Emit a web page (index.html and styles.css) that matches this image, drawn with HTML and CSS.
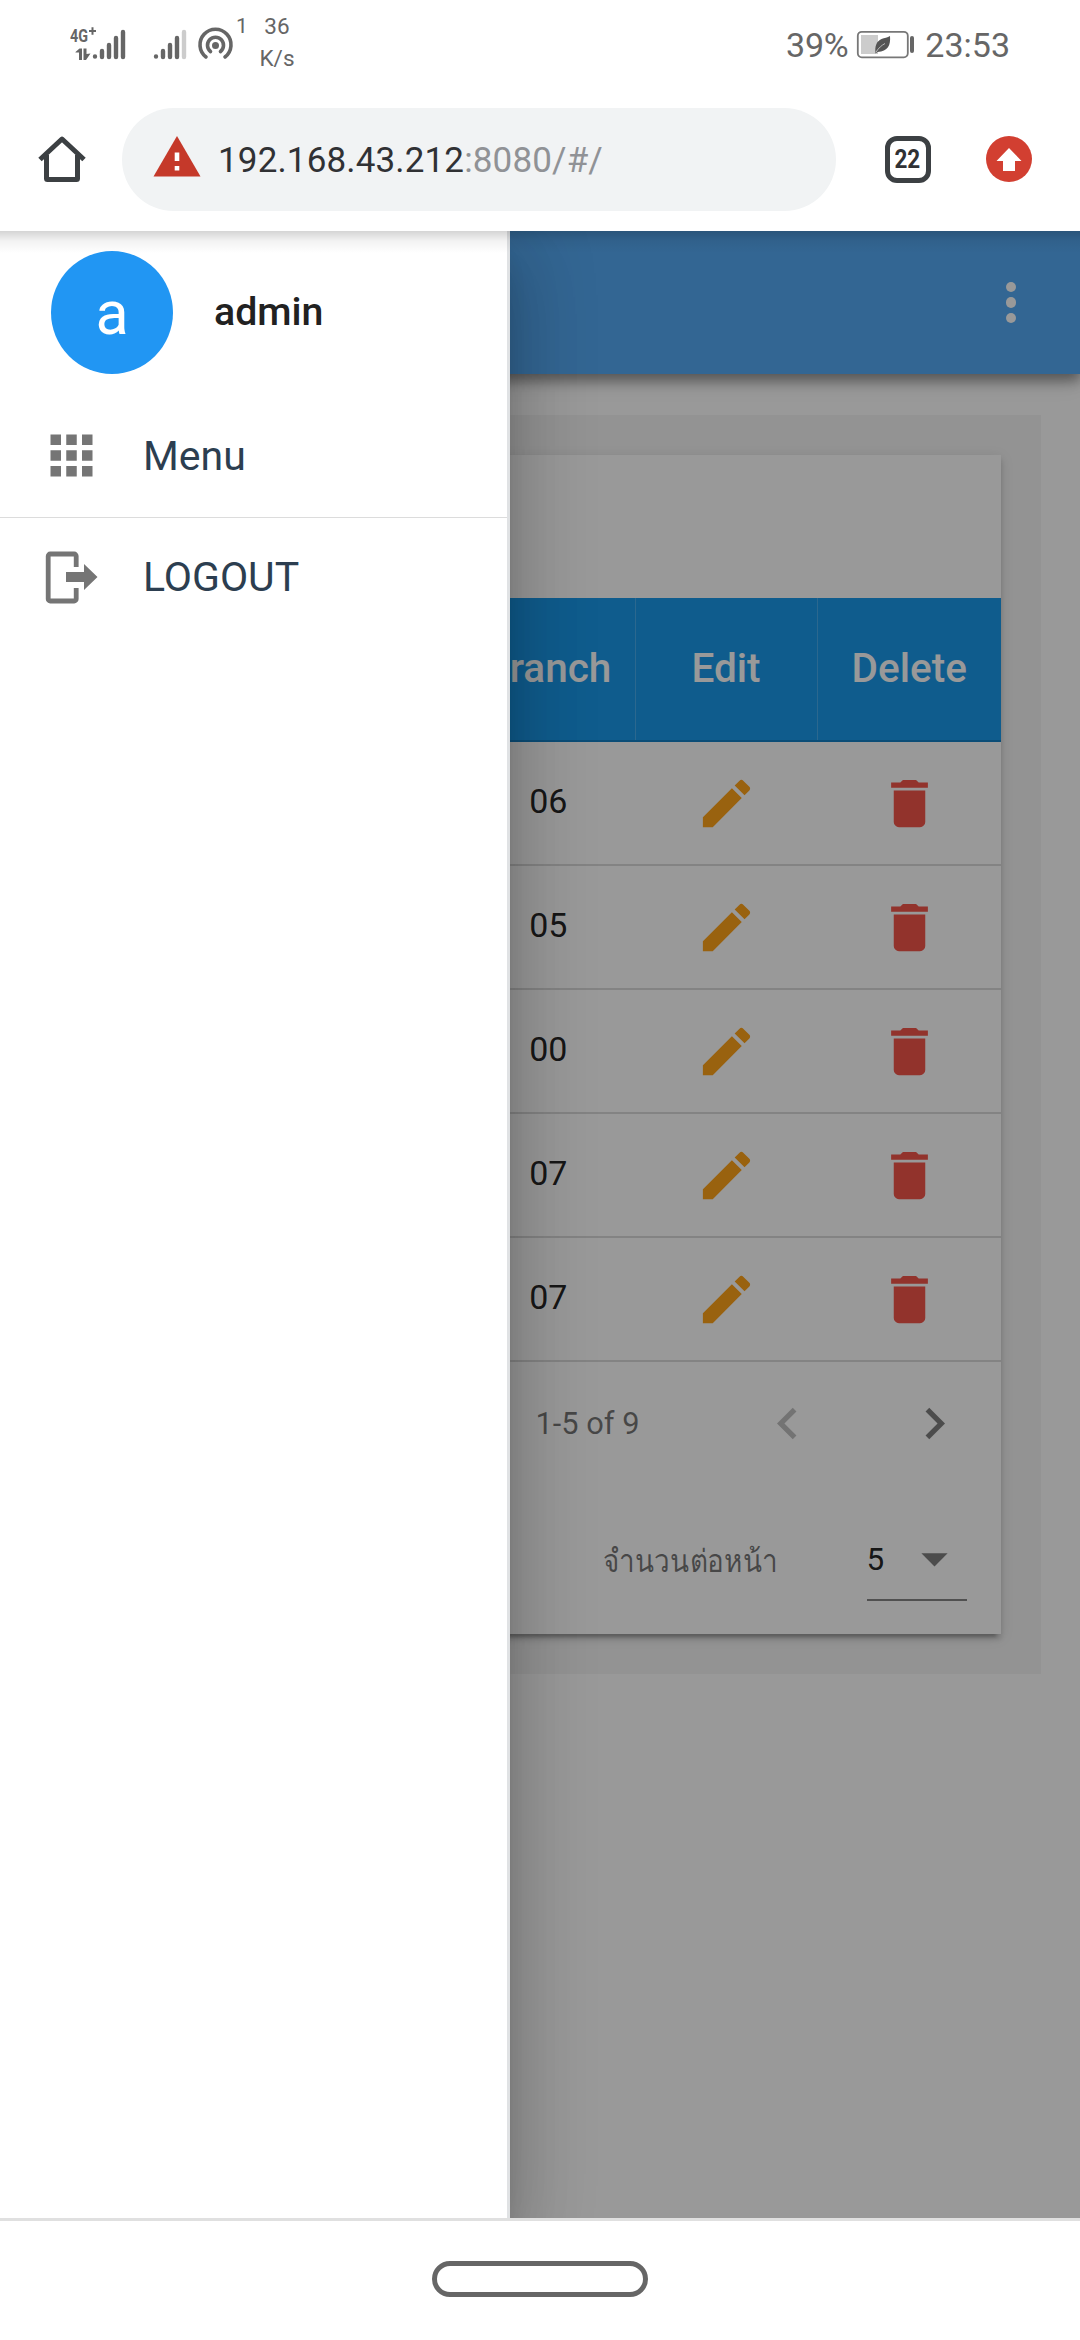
FILE: index.html
```html
<!DOCTYPE html>
<html lang="th">
<head>
<meta charset="utf-8">
<title>192.168.43.212:8080/#/</title>
<link rel="stylesheet" href="styles.css">
</head>
<body>
<svg class="defs" width="0" height="0">
  <symbol id="pencil" viewBox="0 0 24 24"><path d="M20.71 7.04c.39-.39.39-1.04 0-1.41l-2.34-2.34c-.37-.39-1.02-.39-1.41 0l-1.84 1.83 3.75 3.75M3 17.25V21h3.75L17.81 9.93l-3.75-3.75L3 17.25z"/></symbol>
  <symbol id="trash" viewBox="0 0 24 24"><path d="M19 4h-3.5l-1-1h-5l-1 1H5v2h14M6 19a2 2 0 0 0 2 2h8a2 2 0 0 0 2-2V7H6v12z"/></symbol>
</svg>

<header class="status">
  <svg class="signals" width="180" height="60" viewBox="0 0 180 60">
    <g fill="#666" font-family="Roboto, sans-serif" font-weight="700">
      <text x="0" y="28" font-size="19" textLength="18" lengthAdjust="spacingAndGlyphs">4G</text>
      <path d="M19 16h2.500v-2.700h2V16H26v2h-2.500v2.700h-2V18H19z"/>
      <path d="M5.500 38 9.500 34.500H12V46H9v-7.500H5.500zM13.500 34.500h3V40l4-.5-4.500 6.500h-2.500z"/>
    </g>
    <g stroke="#666" stroke-width="4.400" stroke-linecap="round">
      <path d="M25 42.500v.01M32 37v6M39 31v12M46 24v19M53 18v25"/>
      <path d="M86 42.500v.01M93 37v6M100 31v12M107 24v19"/>
      <path d="M114 18v25" stroke="#ccc"/>
    </g>
    <g fill="none" stroke="#666" stroke-width="3.600" stroke-linecap="round">
      <circle cx="145.500" cy="31.500" r="1.700"/>
      <path d="M140.500 37.500a8 8 0 1 1 10 0"/>
      <path d="M136 43a15.500 15.500 0 1 1 19 0"/>
    </g>
  </svg>
  <span class="hotspot-count">1</span>
  <div class="speed"><span>36</span><span>K/s</span></div>
  <span class="level">39%</span>
  <svg class="battery" width="60" height="30" viewBox="0 0 60 30">
    <rect x="1.800" y="1.800" width="50" height="25.500" rx="4" fill="none" stroke="#777" stroke-width="1.800"/>
    <path d="M5 5h17v19H5z" fill="#ccc"/>
    <rect x="54" y="6" width="4" height="17" rx="2" fill="#666"/>
    <path d="M34 6c.8 9-2 15.500-12.500 16l-2 1.500c-1-7 1-12.500 6-14.500 3-1 6-1.200 8.500-3z" fill="#555"/>
    <path d="M20 22c3-4.500 5.500-6.500 9-8.500" stroke="#bbb" stroke-width="1" fill="none"/>
  </svg>
  <span class="clock">23:53</span>
</header>

<nav class="browser">
  <svg class="home" width="48" height="48" viewBox="0 0 48 48" fill="none" stroke="#3c4043" stroke-width="5" stroke-linejoin="round">
    <path d="M2 24.500 24 4l22 20.500"/><path d="M8.500 20v23.500a1 1 0 0 0 1 1h29a1 1 0 0 0 1-1V20"/>
  </svg>
  <div class="address">
    <svg width="48" height="41" viewBox="0 0 48 41"><path d="M24 0 47.500 40.500H.5z" fill="#c5392a"/><path d="M21.700 16.500h4.600v8.500h-4.600zM21.700 30h4.600v4.500h-4.600z" fill="#fff"/></svg>
    <span class="url"><b>192.168.43.212</b>:8080/#/</span>
  </div>
  <div class="tabs"><span>22</span></div>
  <svg class="update" width="46" height="46" viewBox="0 0 46 46"><circle cx="23" cy="23" r="23" fill="#d23f31"/><path d="M23 12 35.500 25H29v10H17V25h-6.500z" fill="#fff"/></svg>
</nav>

<main class="viewport">
  <div class="page">
    <div class="appbar"><i></i><i></i><i></i></div>
    <div class="panel">
      <section class="card">
        <div class="card-title"></div>
        <div class="row head"><span></span><span>Branch</span><span>Edit</span><span>Delete</span></div>
        <div class="row"><span></span><span>06</span><svg class="edit"><use href="#pencil"/></svg><svg class="del"><use href="#trash"/></svg></div>
        <div class="row"><span></span><span>05</span><svg class="edit"><use href="#pencil"/></svg><svg class="del"><use href="#trash"/></svg></div>
        <div class="row"><span></span><span>00</span><svg class="edit"><use href="#pencil"/></svg><svg class="del"><use href="#trash"/></svg></div>
        <div class="row"><span></span><span>07</span><svg class="edit"><use href="#pencil"/></svg><svg class="del"><use href="#trash"/></svg></div>
        <div class="row"><span></span><span>07</span><svg class="edit"><use href="#pencil"/></svg><svg class="del"><use href="#trash"/></svg></div>
        <div class="pager">
          <span class="range">1-5 of 9</span>
          <svg class="chev off" viewBox="0 0 24 24"><path d="M15.410 16.580 10.830 12l4.580-4.590L14 6l-6 6 6 6z"/></svg>
          <svg class="chev" viewBox="0 0 24 24"><path d="M8.590 16.580 13.170 12 8.590 7.410 10 6l6 6-6 6z"/></svg>
        </div>
        <div class="per-page">
          <span class="per-label">จำนวนต่อหน้า</span>
          <div class="select"><span>5</span><svg viewBox="0 0 24 24"><path d="M7 10l5 5 5-5z"/></svg></div>
        </div>
      </section>
    </div>
  </div>
  <div class="scrim"></div>
  <aside class="drawer">
    <div class="user"><span class="avatar">a</span><span class="name">admin</span></div>
    <div class="item menu">
      <svg viewBox="0 0 24 24"><path d="M4 4h4v4H4zM10 4h4v4h-4zM16 4h4v4h-4zM4 10h4v4H4zM10 10h4v4h-4zM16 10h4v4h-4zM4 16h4v4H4zM10 16h4v4h-4zM16 16h4v4h-4z"/></svg>
      <span>Menu</span>
    </div>
    <div class="item logout">
      <svg viewBox="0 0 63 63"><path d="M36.200 21V10a2 2 0 0 0-2-2H10.200a2 2 0 0 0-2 2v43a2 2 0 0 0 2 2h24a2 2 0 0 0 2-2V42" fill="none" stroke="#757575" stroke-width="4.800"/><path d="M26 26h18v-8l13.500 13L44 44v-8H26z"/></svg>
      <span>LOGOUT</span>
    </div>
  </aside>
  <div class="top-shade"></div>
</main>

<footer class="sysnav"><div class="pill"></div></footer>
</body>
</html>
```
FILE: styles.css
```css
* { box-sizing: border-box; }
body {
  margin: 0;
  width: 1080px;
  height: 2340px;
  display: flex;
  flex-direction: column;
  overflow: hidden;
  background: #fff;
  font-family: Roboto, "Noto Sans", sans-serif;
}
.defs { position: absolute; }

/* system status bar */
.status {
  height: 90px;
  flex: none;
  display: flex;
  align-items: flex-start;
  color: #666;
  padding-left: 70px;
}
.signals { margin-top: 14px; flex: none; }
.hotspot-count { font-size: 21px; line-height: 22px; margin: 15px 0 0 -14px; width: 12px; }
.speed {
  margin: 10px 0 0 6px;
  width: 46px;
  display: flex;
  flex-direction: column;
  align-items: center;
  font-size: 22.500px;
  line-height: 32px;
}
.level { margin: 25px 0 0 auto; font-size: 34px; line-height: 40px; letter-spacing: -.3px; }
.battery { margin: 30px 0 0 8px; }
.clock { margin: 25px 70px 0 9px; font-size: 34px; line-height: 40px; }

/* browser toolbar */
.browser {
  height: 141px;
  flex: none;
  display: flex;
  align-items: center;
  padding: 0 48px 3px 38px;
}
.address {
  margin-left: 36px;
  width: 714px;
  height: 103px;
  border-radius: 52px;
  background: #f1f3f4;
  display: flex;
  align-items: center;
  padding-left: 31px;
}
.address svg { margin-top: -6px; }
.url { margin: 3px 0 0 17px; font-size: 35px; letter-spacing: .15px; color: #909296; white-space: nowrap; }
.url b { font-weight: 400; color: #303134; }
.tabs {
  margin-left: 48.500px;
  width: 46px;
  height: 47px;
  border: 5px solid #3c4043;
  border-radius: 12px;
  display: flex;
  align-items: center;
  justify-content: center;
  font-size: 25px;
  font-weight: 700;
  color: #303134;
}
.tabs span { transform: scaleX(.9); }
.update { margin-left: auto; }

/* web page */
.viewport { height: 1987px; flex: none; position: relative; overflow: hidden; }
.page { height: 100%; background: #fff; }
.appbar {
  height: 143px;
  background: #55aaf5;
  box-shadow: 0 5px 11px rgba(0,0,0,.3), 0 10px 13px rgba(0,0,0,.14), 0 3px 26px rgba(0,0,0,.12);
  display: flex;
  flex-direction: column;
  align-items: center;
  justify-content: center;
  gap: 5px;
  padding-left: 942px;
}
.appbar i { width: 10.500px; height: 10.500px; border-radius: 50%; background: #fff; }
.panel { margin: 41px 39px 0; padding: 40px; background: #f5f5f5; }
.card {
  background: #fff;
  height: 1179px;
  box-shadow: 0 8px 3px -5px rgba(0,0,0,.2), 0 5px 5px rgba(0,0,0,.14), 0 3px 13px rgba(0,0,0,.12);
}
.card-title { height: 143px; }
.row {
  display: grid;
  grid-template-columns: 382px 174.500px 182px 183.500px;
  height: 124px;
  align-items: center;
  justify-items: center;
  border-bottom: 2px solid #dadada;
  font-size: 34px;
  color: rgba(0,0,0,.87);
}
.row > span { margin-top: -4px; }
.row svg { width: 63px; height: 63px; margin-top: 1px; }
.edit { fill: #ffa31a; }
.del { fill: #f4554a; }
.head {
  height: 144px;
  background: #1999ec;
  border-bottom: 2px solid #1381c6;
  color: #fff;
  font-size: 40.500px;
  font-weight: 500;
}
.row.head > span {
  margin: 0;
  width: 100%;
  height: 100%;
  display: flex;
  align-items: center;
  justify-content: center;
  border-right: 1px solid #48adee;
  padding-bottom: 2px;
}
.row.head > span:last-child { border: 0; }
.pager {
  height: 121px;
  display: flex;
  align-items: center;
  padding: 2px 35.500px 0 456.500px;
  color: rgba(0,0,0,.54);
  font-size: 30.800px;
}
.pager .range { width: 220px; margin-top: -1px; }
.chev { width: 63px; height: 63px; fill: #7f7f7f; }
.chev { margin-left: auto; }
.chev.off { margin-left: 0; fill: #c0c0c0; }
.per-page { display: flex; padding-left: 524px; color: rgba(0,0,0,.54); }
.per-label {
  width: 263.500px;
  font-size: 31.500px;
  line-height: 40px;
  margin-top: 59px;
  white-space: nowrap;
  transform: scaleX(.885);
  transform-origin: left;
}
.select {
  width: 100px;
  height: 70px;
  margin-top: 48px;
  border-bottom: 2px solid #858585;
  display: flex;
  font-size: 31.500px;
  line-height: 54px;
  color: rgba(0,0,0,.87);
}
.select span { padding-top: 2px; }
.select svg { width: 63px; height: 63px; margin: -4px 0 0 19px; fill: #7f7f7f; }

/* dimming layer and navigation drawer over the page */
.scrim { position: absolute; inset: 0; background: rgba(0,0,0,.4); }
.drawer {
  position: absolute;
  left: 0;
  top: 0;
  bottom: 0;
  width: 510px;
  background: #fff;
  border-right: 3px solid #e0e2e4;
  box-shadow: 0 20px 26px -13px rgba(0,0,0,.2), 0 42px 63px 5px rgba(0,0,0,.14), 0 16px 79px 13px rgba(0,0,0,.12);
}
.user { height: 163px; padding: 20px 0 0 51px; display: flex; }
.avatar {
  width: 122px;
  height: 123px;
  border-radius: 50%;
  background: #2196f3;
  color: #fff;
  font-size: 61px;
  display: flex;
  align-items: center;
  justify-content: center;
}
.name { margin-left: 41px; line-height: 122px; font-size: 39.300px; font-weight: 500; color: #212121; }
.item { display: flex; align-items: center; height: 124px; padding-left: 40px; color: #2c3e50; font-size: 41px; }
.item svg { width: 63px; height: 63px; fill: #757575; }
.item span { margin-left: 40px; }
.menu { border-bottom: 1px solid #dcdcdc; }
.logout { margin-top: -3px; }
.top-shade { position: absolute; left: 0; right: 0; top: 0; height: 22px; background: linear-gradient(rgba(0,0,0,.17), rgba(0,0,0,.05) 45%, transparent); }

/* system navigation bar */
.sysnav { flex: 1; border-top: 3px solid #e0e0e0; display: flex; justify-content: center; padding-top: 40px; }
.pill { width: 216px; height: 36px; border: 5px solid #666; border-radius: 18px; }
```
